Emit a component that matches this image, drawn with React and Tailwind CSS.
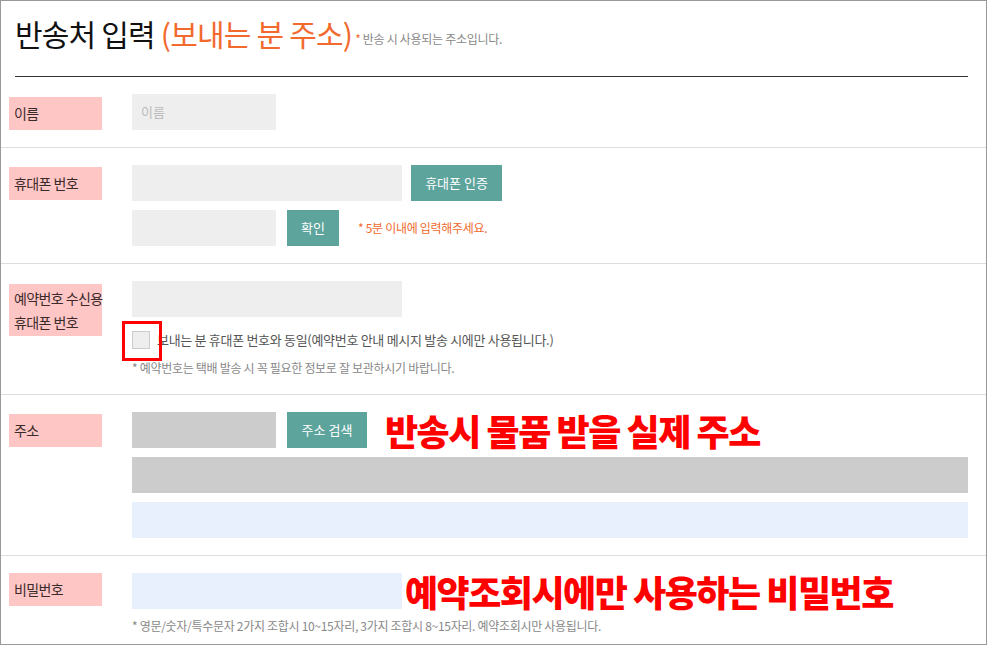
import React from 'react';

const font = { fontFamily: '"Noto Sans CJK KR", "Noto Sans", sans-serif' };

const Label = ({ children, className = '' }) => (
  <div className={`w-[93px] shrink-0 whitespace-nowrap bg-[#ffc6c6] px-[5px] text-[14px] tracking-[-0.6px] text-[#3a2a2a] flex items-center ${className}`}>
    {children}
  </div>
);

const Button = ({ children, className = '' }) => (
  <button type="button" className={`h-[36px] shrink-0 bg-[#5ca49c] text-[13px] text-white ${className}`}>
    {children}
  </button>
);

const Note = ({ children, className = '' }) => (
  <span className={`block text-[36px] font-black leading-[36px] tracking-[-1.5px] text-[#ff0000] ${className}`}>{children}</span>
);

const Row = ({ label, children, last = false }) => (
  <div className={`flex pl-[8px] pr-[18px] pt-[17px] ${last ? '' : 'border-b border-[#dddddd] pb-[17px]'}`}>
    <div className="w-[123px] shrink-0">{label}</div>
    <div className="flex flex-1 flex-col">{children}</div>
  </div>
);

export default function App() {
  return (
    <div style={font} className="h-[645px] w-[987px] overflow-hidden border border-[#999999] bg-white">
      {/* title */}
      <div className="mx-[14px] mr-[18px] flex h-[76px] items-center border-b border-[#333333] pb-[11px]">
        <h1 className="text-[30px] font-normal tracking-[-0.8px] text-[#111111]">
          반송처 입력 <span className="text-[#f26a2e]">(보내는 분 주소)</span>
        </h1>
        <span className="ml-[3px] mt-[12px] text-[12px] tracking-[-0.3px] text-[#888888]">
          <span className="text-[#f26a2e]">*</span> 반송 시 사용되는 주소입니다.
        </span>
      </div>

      <Row label={<Label className="mt-[3px] h-[33px]">이름</Label>}>
        <div className="flex h-[36px] w-[144px] items-center bg-[#eeeeee] pl-[9px] text-[13px] text-[#bbbbbb]">이름</div>
      </Row>

      <Row label={<Label className="mt-[2px] h-[33px]">휴대폰 번호</Label>}>
        <div className="flex items-center">
          <div className="h-[36px] w-[270px] bg-[#eeeeee]" />
          <Button className="ml-[9px] w-[91px]">휴대폰 인증</Button>
        </div>
        <div className="mt-[9px] flex items-center">
          <div className="h-[36px] w-[144px] bg-[#eeeeee]" />
          <Button className="ml-[11px] w-[52px]">확인</Button>
          <span className="ml-[19px] text-[12px] tracking-[-0.3px] text-[#f26a2e]">* 5분 이내에 입력해주세요.</span>
        </div>
      </Row>

      <Row
        label={
          <Label className="mt-[3px] h-[52px] leading-[24px]">
            예약번호 수신용<br />휴대폰 번호
          </Label>
        }
      >
        <div className="h-[36px] w-[270px] bg-[#eeeeee]" />
        <div className="relative mt-[13px] flex items-center">
          <span className="h-[18px] w-[18px] border border-[#cccccc] bg-[#eeeeee]" />
          <span className="ml-[7px] text-[13px] tracking-[-0.3px] text-[#555555]">
            보내는 분 휴대폰 번호와 동일(예약번호 안내 메시지 발송 시에만 사용됩니다.)
          </span>
          <span className="absolute left-[-10px] top-[-9px] h-[40px] w-[40px] border-[3px] border-[#ff0000]" />
        </div>
        <p className="mt-[9px] text-[12px] tracking-[-0.3px] text-[#888888]">* 예약번호는 택배 발송 시 꼭 필요한 정보로 잘 보관하시기 바랍니다.</p>
      </Row>

      <Row label={<Label className="mt-[2px] h-[33px]">주소</Label>}>
        <div className="flex h-[36px] items-center">
          <div className="h-[36px] w-[144px] bg-[#cccccc]" />
          <Button className="ml-[11px] w-[80px]">주소 검색</Button>
          <Note className="ml-[18px]">반송시 물품 받을 실제 주소</Note>
        </div>
        <div className="mt-[9px] h-[36px] w-full bg-[#cccccc]" />
        <div className="mt-[9px] h-[36px] w-full bg-[#e8f0fe]" />
      </Row>

      <Row last label={<Label className="h-[33px]">비밀번호</Label>}>
        <div className="flex h-[36px] items-center">
          <div className="h-[36px] w-[270px] bg-[#e8f0fe]" />
          <Note className="ml-[3px]">예약조회시에만 사용하는 비밀번호</Note>
        </div>
        <p className="mt-[8px] text-[12px] tracking-[-0.3px] text-[#888888]">
          * 영문/숫자/특수문자 2가지 조합시 10~15자리, 3가지 조합시 8~15자리. 예약조회시만 사용됩니다.
        </p>
      </Row>
    </div>
  );
}
